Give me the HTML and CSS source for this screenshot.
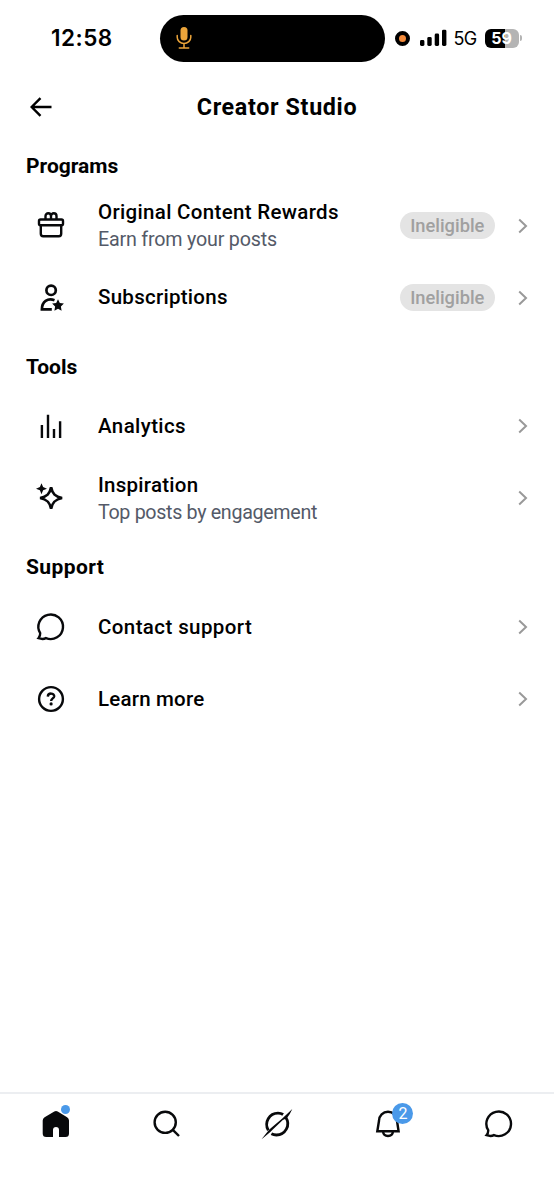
FILE: index.html
```html
<!DOCTYPE html>
<html lang="en">
<head>
<meta charset="utf-8">
<title>Creator Studio</title>
<link rel="stylesheet" href="styles.css">
</head>
<body>
<div class="screen">
  <div class="status">
    <div class="clock">12:58</div>
    <div class="island">
      <svg width="16" height="24" viewBox="0 0 16 24" fill="none" stroke="#eba43a" stroke-width="1.5" stroke-linecap="round"><rect x="4.5" y="1" width="7" height="13.5" rx="3.5" fill="#eba43a" stroke="none"/><path d="M1.2 9.5v1.7a6.8 6.3 0 0 0 13.6 0V9.5M8 17.8v4M3.3 22h9.4"/></svg>
    </div>
    <div class="indicators">
      <span class="recording"></span>
      <svg class="signal" width="27" height="18" viewBox="0 0 27 18"><rect x="0" y="11" width="4.4" height="6" rx="1.4"/><rect x="7.3" y="8" width="4.4" height="9" rx="1.4"/><rect x="14.7" y="4.5" width="4.4" height="12.5" rx="1.4"/><rect x="22" y="0.7" width="4.4" height="16.3" rx="1.4"/></svg>
      <span class="network">5G</span>
      <span class="battery">59</span>
      <span class="battery-tip"></span>
    </div>
  </div>

  <header class="header">
    <svg class="back" width="24" height="22" viewBox="0 0 24 22" fill="none" stroke="#000" stroke-width="2.4" stroke-linejoin="miter"><path d="M11.5 2.2 2.7 11l8.8 8.8M2.7 11H22.5"/></svg>
    <h1>Creator Studio</h1>
  </header>

  <main class="content">
    <section>
      <h2 class="programs">Programs</h2>
      <div class="row">
        <svg class="icon" viewBox="0 0 32 32"><rect x="4" y="9.5" width="24" height="5.7" rx="1.5"/><path d="M5.8 15.2v8.6q0 2.4 2.4 2.4h15.6q2.4 0 2.4-2.4v-8.6M10.5 9.2V6.1a2.75 2.9 0 0 1 5.5 0v3.1M16 9.2V6.1a2.75 2.9 0 0 1 5.5 0v3.1"/></svg>
        <div class="label double"><div class="name rewards">Original Content Rewards</div><div class="note earn">Earn from your posts</div></div>
        <span class="pill">Ineligible</span>
        <svg class="chevron" viewBox="0 0 10 16"><path d="M1.2 1.6 8 8l-6.8 6.4"/></svg>
      </div>
      <div class="row">
        <svg class="icon person" viewBox="0 0 32 32"><circle cx="16.1" cy="8.3" r="4.7"/><path d="M19.5 18.2c-6.8-2.6-12.6 1.5-12.6 9.1h9.9"/><path class="solid" d="m23 17.2 1.8 3.8 4.1.6-3 2.9.7 4.2-3.6-2-3.6 2 .7-4.2-3-2.9 4.1-.6z"/></svg>
        <div class="label"><div class="name subscriptions">Subscriptions</div></div>
        <span class="pill">Ineligible</span>
        <svg class="chevron" viewBox="0 0 10 16"><path d="M1.2 1.6 8 8l-6.8 6.4"/></svg>
      </div>
    </section>
    <section>
      <h2 class="tools">Tools</h2>
      <div class="row">
        <svg class="icon" viewBox="0 0 32 32"><path d="M6.9 15v13M13 4.8V28M19 19v9M25.1 11.3V28"/></svg>
        <div class="label"><div class="name analytics">Analytics</div></div>
        <svg class="chevron" viewBox="0 0 10 16"><path d="M1.2 1.6 8 8l-6.8 6.4"/></svg>
      </div>
      <div class="row">
        <svg class="icon sparkle" viewBox="0 0 32 32"><path d="M16.1 5.2c1.3 6.7 4.2 9.5 11 10.8-6.8 1.3-9.7 4.2-11 10.8-1.3-6.6-4.2-9.5-11-10.8 6.8-1.3 9.7-4.1 11-10.8z"/><path class="solid" d="m6.5 1.2 1.6 3.9 3.9 1.6-3.9 1.6-1.6 3.9-1.6-3.9L1 6.7l3.9-1.6z"/></svg>
        <div class="label double"><div class="name inspiration">Inspiration</div><div class="note top-posts">Top posts by engagement</div></div>
        <svg class="chevron" viewBox="0 0 10 16"><path d="M1.2 1.6 8 8l-6.8 6.4"/></svg>
      </div>
    </section>
    <section>
      <h2 class="support">Support</h2>
      <div class="row">
        <svg class="icon" viewBox="0 0 32 32"><path d="M5.2 22.2A12.3 12.3 0 1 1 10.9 27.1Q8 28.7 3.5 27.2 5.4 25 5.2 22.2z"/></svg>
        <div class="label"><div class="name contact">Contact support</div></div>
        <svg class="chevron" viewBox="0 0 10 16"><path d="M1.2 1.6 8 8l-6.8 6.4"/></svg>
      </div>
      <div class="row">
        <svg class="icon" viewBox="0 0 32 32"><circle cx="16" cy="16" r="11.9"/><path d="M12.8 13.6c.2-4.2 6.8-3.8 6.4-.2-.3 2.1-3.1 2-3.1 4.7"/><circle class="solid" cx="16.1" cy="20.9" r="1.6"/></svg>
        <div class="label"><div class="name learn">Learn more</div></div>
        <svg class="chevron" viewBox="0 0 10 16"><path d="M1.2 1.6 8 8l-6.8 6.4"/></svg>
      </div>
    </section>
  </main>

  <nav class="tabs">
    <div class="tab"><svg class="icon" viewBox="0 0 32 32"><path class="solid" d="M14.3 3.4q1.7-1 3.4 0l9.4 5.8q1.9 1.2 1.9 3.4v13q0 3.5-3.5 3.5H19v-7.2a3 3 0 0 0-6 0v7.2H6.2q-3.5 0-3.5-3.5v-13q0-2.2 1.9-3.4z"/></svg><span class="dot"></span></div>
    <div class="tab"><svg class="icon" viewBox="0 0 32 32"><circle cx="14.2" cy="14.3" r="10.6"/><path d="m21.8 21.8 6.2 6.2"/></svg></div>
    <div class="tab"><svg class="icon grok" viewBox="0 0 32 32"><path class="ring" d="M7.3 22.2C2.8 14.3 8.4 5.1 17 5.1q3 0 5.1 1.4M24.7 9.3C30 17.4 24.2 27 15.4 27q-2.7 0-5-1.2"/><path class="solid" d="M.5 31.2Q3.3 27.9 7.7 22.3L10 20l11-9.2L31.3 1Q29.1 6.2 25.8 10.2l-4 1.9-10 9.3-2.5 2.5Q5.2 27.4.5 31.2z"/></svg></div>
    <div class="tab"><svg class="icon" viewBox="0 0 32 32"><path d="M7 12.8a9 9 0 0 1 18 0L26.6 23.3H5.3zM11 23.7c.7 5.7 9.3 5.7 10 0"/></svg><span class="badge">2</span></div>
    <div class="tab"><svg class="icon" viewBox="0 0 32 32"><path d="M5.2 22.2A12.3 12.3 0 1 1 10.9 27.1Q8 28.7 3.5 27.2 5.4 25 5.2 22.2z"/></svg></div>
  </nav>
</div>
</body>
</html>
```
FILE: styles.css
```css
* { box-sizing: border-box; }
body { margin: 0; background: #fff; color: #000; font-family: Roboto, "Liberation Sans", sans-serif; }
.screen { width: 554px; height: 1200px; display: flex; flex-direction: column; overflow: hidden; }
.status { height: 76px; display: flex; align-items: center; padding-right: 31px; font-family: Inter, sans-serif; }
.clock { width: 160px; padding-left: 51px; font-size: 22.5px; font-weight: 600; letter-spacing: 0.5px; line-height: 26px; padding-bottom: 1px; }
.island { width: 225px; height: 47px; border-radius: 24px; background: #000; display: flex; align-items: center; padding-left: 16px; }
.indicators { display: flex; align-items: center; margin-left: 9.5px; }
.recording { width: 15px; height: 15px; border: 4px solid #000; border-radius: 50%; background: #f58b3c; }
.signal { margin-left: 10px; }
.network { font-size: 18px; letter-spacing: -0.6px; margin-left: 7px; width: 31px; }
.battery { flex: none; width: 34px; height: 19px; border-radius: 6px; background: linear-gradient(90deg, #000 60%, #b4b4b4 60%); color: #fff; font-size: 16px; line-height: 19px; font-weight: 700; text-align: center; }
.battery-tip { width: 2px; height: 6px; margin-left: 1px; border-radius: 0 2px 2px 0; background: #b4b4b4; }
.header { height: 62px; display: grid; grid-template-columns: 60px 1fr 60px; align-items: center; }
.back { margin-left: 29px; }
h1 { margin: 0; text-align: center; font-size: 23.3px; font-weight: 700; letter-spacing: 0.65px; white-space: nowrap; }
.content { flex: 1; padding-top: 5px; display: flex; flex-direction: column; gap: 10px; }
h2 { height: 46.6px; margin: 0; padding-left: 26px; font-size: 21px; line-height: 47.6px; font-weight: 700; }
.support { letter-spacing: 0.4px; }
.row { height: 72px; display: flex; align-items: center; padding: 0 26px 0 35px; }
.icon { flex: none; width: 32px; height: 32px; fill: none; stroke: #08090b; stroke-width: 2.4; }
.person { stroke-width: 2.7; }
.sparkle { stroke-width: 2.7; }
.solid { fill: #08090b; stroke: none; }
.label { flex: 1; margin-left: 31px; padding-top: 0.5px; white-space: nowrap; }
.double { padding-top: 2.4px; }
.name { font-size: 20.5px; line-height: 27px; font-weight: 500; }
.note { font-size: 19.7px; line-height: 28px; color: #545a68; }
.rewards { letter-spacing: 0.32px; }
.earn { letter-spacing: -0.2px; }
.subscriptions { letter-spacing: 0.27px; }
.analytics { letter-spacing: 0.4px; }
.inspiration { letter-spacing: 0.25px; }
.top-posts { letter-spacing: -0.33px; }
.contact { letter-spacing: 0.4px; }
.learn { letter-spacing: 0.2px; }
.pill { width: 95.5px; height: 27px; border-radius: 14px; background: #e4e4e4; color: #a0a0a0; font-size: 18.3px; line-height: 27px; font-weight: 500; text-align: center; }
.chevron { width: 10px; height: 16px; margin-left: 23px; fill: none; stroke: #999; stroke-width: 2; }
.tabs { height: 108px; border-top: 2px solid #eceef1; display: flex; align-items: flex-start; padding-top: 14px; }
.tab { flex: 1; position: relative; display: flex; justify-content: center; }
.tab .icon { margin-left: 1px; }
.ring { stroke-width: 2.8; }
.dot { position: absolute; left: 61px; top: -3px; width: 9px; height: 9px; border-radius: 50%; background: #4a99e9; }
.badge { position: absolute; left: 60px; top: -5px; width: 21px; height: 21px; border-radius: 50%; background: #4a99e9; color: #fff; font-size: 16px; line-height: 21px; text-align: center; }
```
